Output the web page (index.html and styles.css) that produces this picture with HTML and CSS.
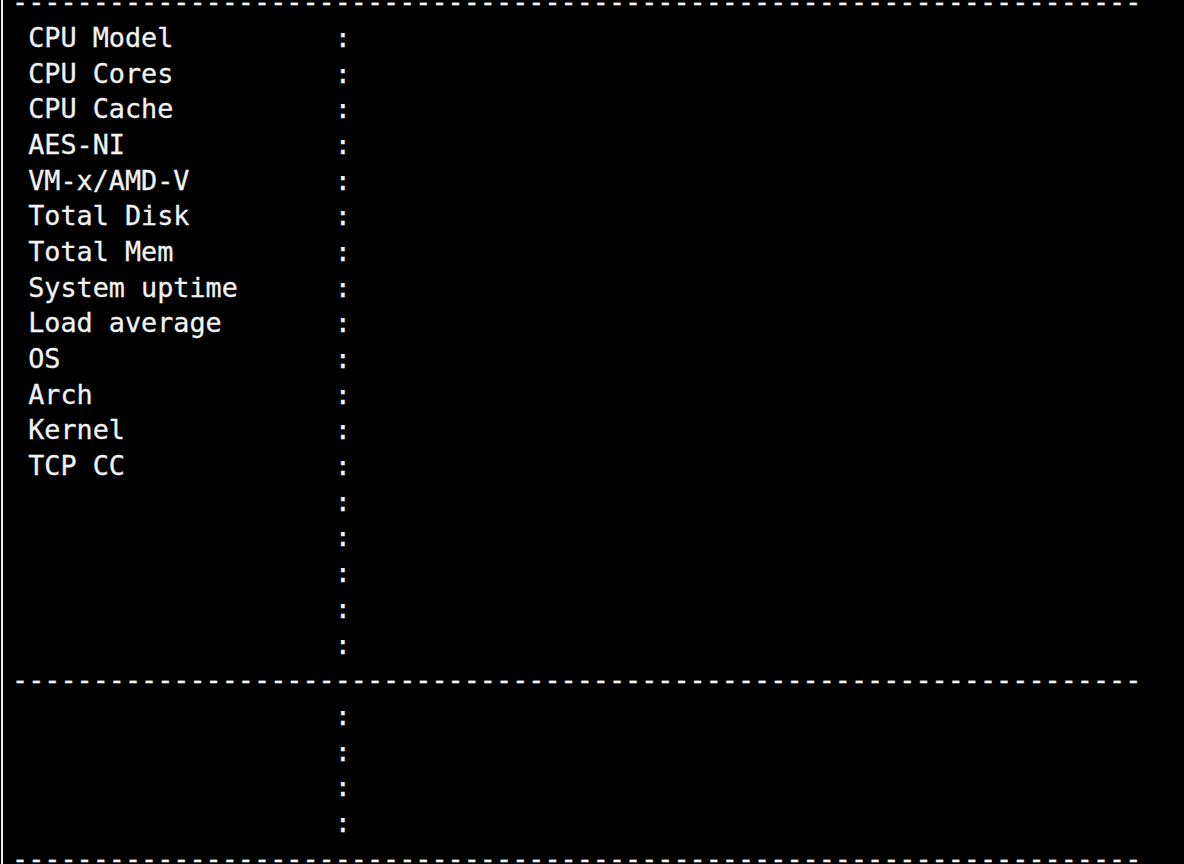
FILE: index.html
```html
<!DOCTYPE html>
<html lang="en">
<head>
<meta charset="utf-8">
<title>System Info</title>
<link rel="stylesheet" href="styles.css">
</head>
<body>
<div class="screen">
<pre class="term">----------------------------------------------------------------------
 CPU Model          :
 CPU Cores          :
 CPU Cache          :
 AES-NI             :
 VM-x/AMD-V         :
 Total Disk         :
 Total Mem          :
 System uptime      :
 Load average       :
 OS                 :
 Arch               :
 Kernel             :
 TCP CC             :
                    :
                    :
                    :
                    :
                    :
----------------------------------------------------------------------
                    :
                    :
                    :
                    :
----------------------------------------------------------------------</pre>
</div>
</body>
</html>
```

FILE: styles.css
```css
html, body {
  margin: 0;
  padding: 0;
  background: #000;
  height: 100%;
  overflow: hidden;
}

.screen {
  margin-left: 1px;
  height: 100%;
  border-left: 2px solid #ececec;
  overflow: hidden;
}

.term {
  margin: -15.6px 0 0 0;
  padding-left: 9px;
  font-family: "DejaVu Sans Mono", "Liberation Mono", monospace;
  font-size: 26.8px;
  line-height: 35.67px;
  color: #f2f2f2;
  -webkit-text-stroke: 0.3px #f2f2f2;
  white-space: pre;
}
```
